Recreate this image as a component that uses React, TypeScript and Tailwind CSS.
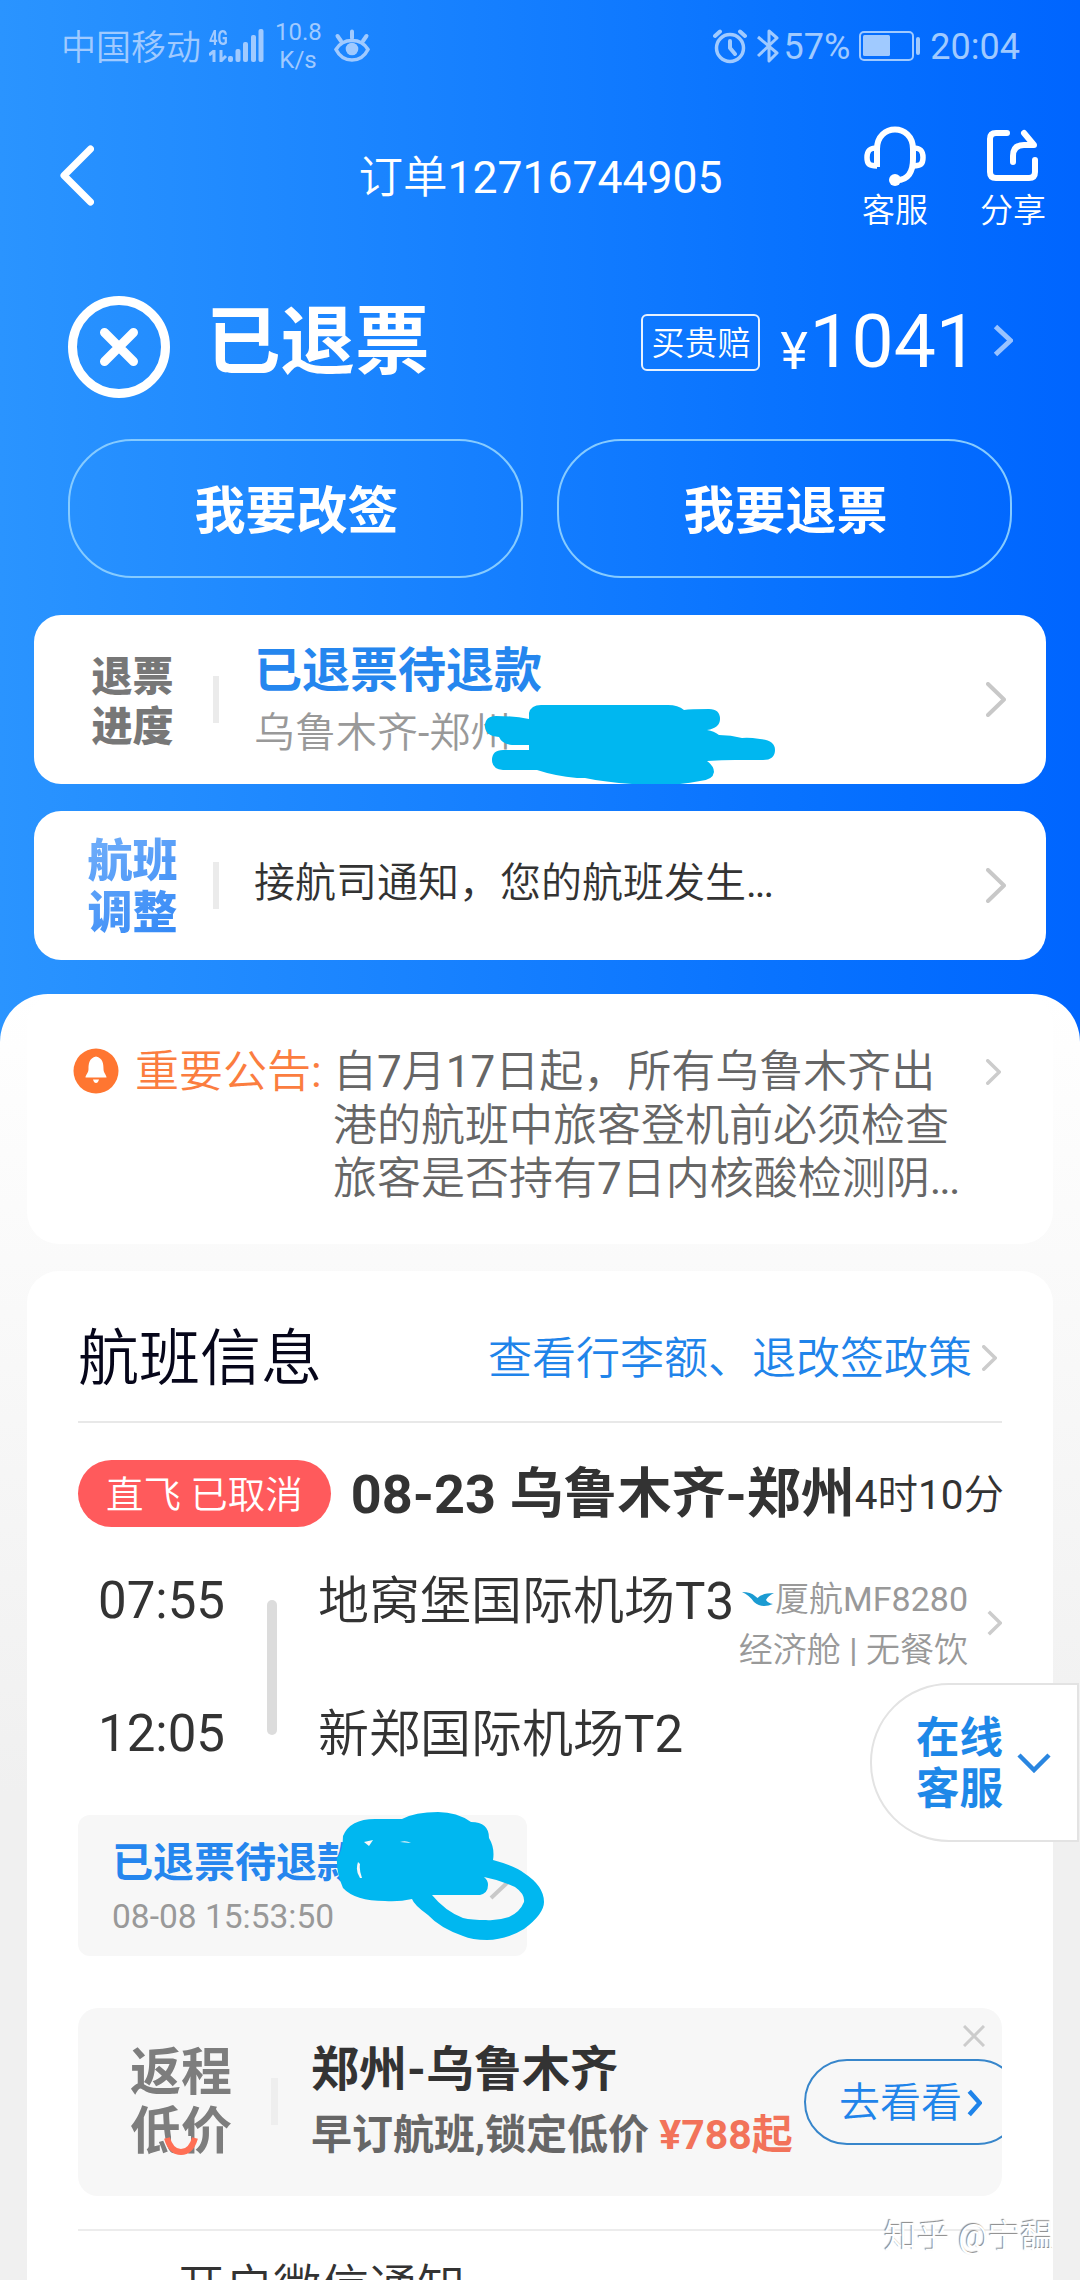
import type { ReactNode } from "react";

interface ChevronProps {
  w: number;
  h: number;
  stroke?: number;
  round?: boolean;
  className?: string;
}

// Right pointing arrow, w/h are the outer size of the drawing
function Chevron({ w, h, stroke = 4, round = true, className = "" }: ChevronProps) {
  const p = stroke / 2;
  return (
    <svg width={w} height={h} viewBox={`0 0 ${w} ${h}`} className={`shrink-0 ${className}`}>
      <path
        d={`M${p} ${p}L${w - p} ${h / 2}L${p} ${h - p}`}
        fill="none"
        stroke="currentColor"
        strokeWidth={stroke}
        strokeLinecap={round ? "round" : "butt"}
        strokeLinejoin={round ? "round" : "miter"}
      />
    </svg>
  );
}

const bold = "font-['Roboto','Noto_Sans_CJK_SC',sans-serif] font-bold";

function StatusBar() {
  return (
    <div className="flex h-[92px] items-center pl-[61px] pr-[60px] text-[#a0caff]">
      <span className="mt-[5px] text-[35px] leading-[36px]">中国移动</span>
      <div className="ml-[8px] h-[36px] w-[20px]">
        <div className="origin-left scale-x-75 text-[20px] font-bold leading-[20px]">4G</div>
        <svg width="20" height="14" viewBox="0 0 20 14" fill="none" stroke="currentColor" strokeWidth="3" className="mt-[1px]">
          <path d="M5 1v12M0 6l5-4M12 1v12M17 7l-5 5" />
        </svg>
      </div>
      <svg width="36" height="36" viewBox="0 0 36 36" className="ml-[-1px]" fill="currentColor">
        <rect x="0" y="28" width="5" height="6" rx="2" />
        <rect x="7.500" y="21" width="5" height="13" rx="2" />
        <rect x="15" y="14" width="5" height="20" rx="2" />
        <rect x="23" y="7" width="5" height="27" rx="2" />
        <rect x="30.500" y="1" width="5" height="33" rx="2" />
      </svg>
      <div className="ml-[11px] w-[46px] text-center text-[24px] leading-[28px]">
        <div>10.8</div>
        <div>K/s</div>
      </div>
      <svg width="36" height="34" viewBox="0 0 36 34" className="ml-[13px]" fill="none" stroke="currentColor" strokeWidth="4" strokeLinecap="round">
        <path d="M2 20.500C9 8.500 27 8.500 34 20.500C27 34.500 9 34.500 2 20.500Z" strokeWidth="3.500" />
        <circle cx="18" cy="20" r="6.300" fill="currentColor" stroke="none" />
        <path d="M18 9V2.500M7 12L3.500 7M29 12L32.500 7" />
      </svg>
      <svg width="34" height="36" viewBox="0 0 34 36" className="ml-auto" fill="none" stroke="currentColor" strokeWidth="3.500" strokeLinecap="round" strokeLinejoin="round">
        <circle cx="17" cy="20" r="13.500" />
        <path d="M17 13v7l5 6M2 8l5-4.500M32 8l-5-4.500" strokeWidth="4" />
      </svg>
      <svg width="22" height="36" viewBox="0 0 22 36" className="ml-[10px]" fill="none" stroke="currentColor" strokeWidth="3" strokeLinejoin="round">
        <path d="M1 9L20 25L12 33V3L20 10L1 28" />
      </svg>
      <span className="ml-[5px] mt-[2px] text-[36px] leading-[36px]">57%</span>
      <svg width="62" height="30" viewBox="0 0 62 30" className="ml-[9px]">
        <rect x="1" y="1" width="53" height="28" rx="4" fill="none" stroke="currentColor" strokeWidth="2" />
        <rect x="4" y="4" width="27" height="21" rx="1.500" fill="currentColor" />
        <rect x="57" y="6" width="4" height="18" rx="2" fill="currentColor" />
      </svg>
      <span className="ml-[9px] mt-[2px] text-[36px] leading-[36px]">20:04</span>
    </div>
  );
}

function NavBar() {
  return (
    <div className="flex h-[168px] justify-between pl-[60px] pr-[31px]">
      <div className="flex w-[187px] pt-[53px]">
        <svg width="34" height="61" viewBox="0 0 34 61" fill="none" stroke="white" strokeWidth="7" strokeLinecap="round" strokeLinejoin="round">
          <path d="M30.500 4L4 30.500L30.500 57" />
        </svg>
      </div>
      <h1 className="-ml-[29px] pt-[61px] text-[44.500px] leading-[50px]">订单12716744905</h1>
      <div className="-ml-[1px] flex w-[187px] gap-[52px] pt-[34px] text-[33px] leading-[40px]">
        <div className="flex flex-col items-center">
          <svg width="64" height="60" viewBox="0 0 64 60" fill="none" stroke="white" strokeWidth="6" strokeLinejoin="round">
            <path d="M14 41V23C14 -3 50 -3 50 23V33C50 46 45 54 34 54" />
            <path d="M14 22C6 22 4 25 4 31.500C4 38 6 40 14 40M50 22C58 22 60 25 60 31.500C60 38 58 40 50 40" strokeWidth="5.500" />
            <circle cx="32" cy="54" r="6" fill="white" stroke="none" />
          </svg>
          <span className="mt-[5px]">客服</span>
        </div>
        <div className="flex flex-col items-center">
          <svg width="54" height="60" viewBox="0 0 54 60" fill="none" stroke="white" strokeWidth="6" strokeLinecap="round" strokeLinejoin="round">
            <path d="M21 7H10Q4 7 4 13V46Q4 52 10 52H43Q49 52 49 46V34" />
            <path d="M27 36V30Q27 19 38 19H48L38 7" />
          </svg>
          <span className="mt-[5px]">分享</span>
        </div>
      </div>
    </div>
  );
}

function OrderStatus() {
  return (
    <>
      <div className="mt-[36px] flex h-[102px] items-center pl-[68px] pr-[67px]">
        <svg width="102" height="102" viewBox="0 0 102 102" fill="none" stroke="white" strokeWidth="9">
          <circle cx="51" cy="51" r="46.500" />
          <path d="M36.500 36.500L65.500 65.500M65.500 36.500L36.500 65.500" strokeLinecap="round" />
        </svg>
        <span className={`ml-[36px] pb-[9px] text-[74.500px] leading-[80px] ${bold}`}>已退票</span>
        <span className="mb-[9px] ml-auto flex h-[57px] w-[119px] items-center justify-center rounded-[6px] border-2 border-white/90 pt-[2px] text-[33px] leading-[34px]">
          买贵赔
        </span>
        <span className="ml-[20px] mt-[10px] w-[29px] text-[52px] leading-[54px]">¥</span>
        <span className="mb-[13px] text-[75px] leading-[80px]">1041</span>
        <Chevron w={20} h={33} stroke={5} round={false} className="mb-[14px] ml-[15px] text-white/60" />
      </div>
      <div className="mt-[41px] flex gap-[34px] px-[68px]">
        {["我要改签", "我要退票"].map((label) => (
          <button
            key={label}
            className={`h-[139px] flex-1 rounded-[64px] border-2 border-[#86cbff] pl-[2px] pt-[6px] text-[51px] leading-[60px] ${bold}`}
          >
            {label}
          </button>
        ))}
      </div>
    </>
  );
}

function NoticeCard({ label, children, className }: { label: ReactNode; children: ReactNode; className: string }) {
  return (
    <div className={`relative mx-[34px] flex shrink-0 items-center rounded-[27px] bg-white pr-[40px] ${className}`}>
      <div className="w-[179px] pl-[18px] pt-[4px] text-center font-['Roboto','Noto_Sans_CJK_SC',sans-serif] font-black">{label}</div>
      <div className="h-[47px] w-[6px] bg-[#ebebeb]" />
      <div className="ml-[35px] flex-1">{children}</div>
      <Chevron w={20} h={35} className="text-[#c8c8c8]" />
    </div>
  );
}

function Announcement() {
  return (
    <section className="flex h-[250px] rounded-[32px] bg-white pl-[46px] pt-[52px] text-[44px] leading-[53.500px]">
      <svg width="46" height="46" viewBox="0 0 46 46" className="mt-[2px]">
        <circle cx="23" cy="23" r="22.500" fill="#ff7631" />
        <path d="M23 8.500C16 10 15.500 16 15.500 21C15.500 25 12.500 27 12.500 29.500H33.500C33.500 27 30.500 25 30.500 21C30.500 16 30 10 23 8.500Z" fill="white" />
        <path d="M20 31.500H26Q25 35 23 35Q21 35 20 31.500Z" fill="white" />
      </svg>
      <span className="ml-[16px] w-[198px] shrink-0 text-[#fb7d3f]">重要公告:</span>
      <p className="w-[641px] shrink-0 whitespace-nowrap text-[#666]">
        自7月17日起，所有乌鲁木齐出
        <br />
        港的航班中旅客登机前必须检查
        <br />
        旅客是否持有7日内核酸检测阴<span className="-tracking-[2px]">...</span>
      </p>
      <Chevron w={15} h={26} stroke={3.5} className="ml-[12px] mt-[13px] text-[#ccc]" />
    </section>
  );
}

function FlightSegment() {
  return (
    <>
      <div className="mt-[37px] flex h-[67px] items-center whitespace-nowrap text-[#333]">
        <span className="flex h-[67px] w-[253px] items-center justify-center rounded-full bg-[#ff5a5c] pt-[3px] text-[37.500px] leading-[40px] text-white">
          直飞 已取消
        </span>
        <span className={`ml-[20px] mt-[2px] text-[54px] leading-[60px] ${bold}`}>08-23 乌鲁木齐-郑州</span>
        <span className="ml-auto -mr-[2px] mt-[2px] text-[40.500px] leading-[44px]">4时10分</span>
      </div>
      <div className="mt-[40px] flex whitespace-nowrap text-[51px] leading-[66px] text-[#333]">
        <div className="mt-[1px] flex w-[189px] shrink-0 flex-col gap-[67px] pl-[20px]">
          <span>07:55</span>
          <span>12:05</span>
        </div>
        <div className="mt-[33px] h-[135px] w-[10px] shrink-0 rounded-full bg-[#dcdcdc]" />
        <div className="ml-[41px] mt-[2px] flex w-[420px] shrink-0 flex-col gap-[67px]">
          <span>地窝堡国际机场T3</span>
          <span>新郑国际机场T2</span>
        </div>
        <div className="-ml-[20px] flex flex-1 flex-col items-end pt-[7px] text-[34px] leading-[51px] text-[#999]">
          <span className="flex items-center">
            <svg width="32" height="16" viewBox="0 0 32 16" className="mr-[1px] shrink-0">
              <path d="M0 0Q9 0 13 4L15.500 6Q20 1 32 1Q26 4 24 8Q26 11 31 12Q20 17 12 10Q7 3 0 0Z" fill="#1b9bd2" />
            </svg>
            厦航MF8280
          </span>
          <span>经济舱 | 无餐饮</span>
        </div>
        <Chevron w={15} h={26} stroke={3.5} round={false} className="ml-[19px] mt-[43px] text-[#ccc]" />
      </div>
    </>
  );
}

function RefundProgress() {
  return (
    <div className="relative mt-[47px] h-[141px] w-[449px] rounded-[12px] bg-[#f7f7f7] pl-[34px] pt-[22px]">
      <div className={`whitespace-nowrap text-[41px] leading-[52px] text-[#2586ee] ${bold}`}>已退票待退款</div>
      <div className="text-[33.500px] leading-[56px] text-[#999]">08-08 15:53:50</div>
      <svg width="260" height="140" viewBox="300 1805 260 140" className="absolute left-[222px] top-[-10px]">
        <path d="M491 1898L508 1882" stroke="#c8c8c8" strokeWidth="4" />
        <path
          fillRule="evenodd"
          fill="#00b7f0"
          d="M343 1836Q350 1819 375 1819H402Q415 1812 438 1812Q457 1812 471 1822Q489 1822 489 1838Q495 1848 493 1860Q515 1866 524 1873Q544 1886 544 1902Q544 1914 524 1929Q506 1940 487 1940Q472 1940 463 1936Q440 1928 428 1915Q414 1905 412 1899Q399 1902 385 1901Q355 1901 343 1888Q336 1872 337 1858Q343 1850 343 1836ZM432 1895H480Q488 1893 488 1885Q488 1880 484 1877Q500 1880 515 1887Q525 1894 524 1902Q520 1912 509 1917Q497 1921 486 1920Q472 1920 463 1918Q445 1911 432 1895ZM364 1842L373 1840L369 1846ZM400 1842Q406 1840 411 1843ZM358 1862Q355 1871 360 1878H362Q359 1870 360 1864Z"
        />
      </svg>
    </div>
  );
}

function ReturnPromo() {
  return (
    <div className="relative mt-[52px] flex h-[188px] overflow-hidden rounded-[20px] bg-[#f7f7f7]">
      <div className={`w-[193px] shrink-0 pl-[52px] pt-[35px] text-[51px] leading-[59px] text-[#7d7d7d] ${bold}`}>
        返程
        <br />
        低价
      </div>
      <svg width="34" height="24" viewBox="0 0 34 24" className="absolute left-[86px] top-[128px]">
        {/* covers the lower strokes so the smile reads as part of the lettering */}
        <path d="M7 0H27V13Q17 22 7 13Z" fill="#f7f7f7" />
        <path d="M3 2Q7 16 17 16Q27 16 31 2" fill="none" stroke="#ff6f55" strokeWidth="6" />
      </svg>
      <div className="mt-[70px] h-[47px] w-[7px] shrink-0 bg-[#eee]" />
      <div className={`ml-[33px] shrink-0 whitespace-nowrap pt-[31px] ${bold}`}>
        <div className="text-[48px] leading-[62px] text-[#333]">郑州-乌鲁木齐</div>
        <div className="mt-[3px] text-[41px] leading-[62px] text-[#666]">
          早订航班,锁定低价 <span className="text-[#f2735a]">¥788起</span>
        </div>
      </div>
      <button className="absolute left-[726px] top-[51px] flex h-[86px] w-[217px] items-center rounded-full border-2 border-[#3786cb] pl-[33px] pt-[1px] text-[41px] leading-[44px] text-[#1f84ea]">
        去看看
        <Chevron w={15} h={28} stroke={4.5} round={false} className="ml-[5px]" />
      </button>
      <svg width="22" height="22" viewBox="0 0 22 22" className="absolute right-[17px] top-[17px]" stroke="#ccc" strokeWidth="3">
        <path d="M1 1L21 21M21 1L1 21" />
      </svg>
    </div>
  );
}

export default function App() {
  return (
    <div className="relative flex h-[2280px] w-[1080px] flex-col overflow-hidden bg-gradient-to-r from-[#2a94ff] via-[#137dff] to-[#0065ff] font-['Roboto','Noto_Sans_CJK_SC_DemiLight','Noto_Sans_CJK_SC',sans-serif]">
      <header className="shrink-0 text-white">
        <StatusBar />
        <NavBar />
        <OrderStatus />
      </header>

      <NoticeCard
        className="mt-[37px] h-[169px]"
        label={
          <div className="text-[41px] leading-[50px] text-[#777]">
            退票
            <br />
            进度
          </div>
        }
      >
        <div className={`pt-[5px] text-[48px] leading-[60px] text-[#2586ee] ${bold}`}>已退票待退款</div>
        <div className="mt-[2px] text-[41px] leading-[60px] text-[#999]">乌鲁木齐-郑州</div>
        <svg width="292" height="82" viewBox="484 703 292 82" className="absolute left-[450px] top-[88px]">
          <path
            fill="#00b7f0"
            d="M485 726Q485 716 496 716Q515 716 529 719V713Q531 705 541 705H668Q678 705 684 710Q690 709 709 709Q720 709 720 719Q720 728 707 730Q714 731 719 735Q731 735 742 738Q748 737 760 739Q775 740 775 750Q775 760 763 760H735Q722 760 707 761Q714 766 714 772Q713 780 700 781Q690 783 680 784H632Q605 782 585 778H577Q555 776 537 770H503Q492 769 492 760Q492 750 503 750H529V745H512Q502 744 499 737Q485 736 485 726Z"
          />
        </svg>
      </NoticeCard>

      <NoticeCard
        className="mt-[27px] h-[149px]"
        label={
          <div className="bg-gradient-to-br from-[#7ab4fa] to-[#2080f5] bg-clip-text text-[45px] leading-[52px] text-transparent">
            航班
            <br />
            调整
          </div>
        }
      >
        <div className="pb-[5px] text-[41px] leading-[60px] text-[#333]">
          接航司通知，您的航班发生<span className="-tracking-[2px]">...</span>
        </div>
      </NoticeCard>

      <main className="mt-[34px] h-[1286px] shrink-0 overflow-hidden rounded-t-[48px] bg-gradient-to-b from-white to-[#f0f0f0] to-[800px] px-[27px]">
        <Announcement />

        <section className="mt-[27px] h-[1040px] rounded-t-[32px] bg-white px-[51px]">
          <div className="flex h-[152px] items-center border-b-2 border-[#e8e8e8] pt-[25px]">
            <h2 className="text-[61px] leading-[64px] text-[#06061a]">航班信息</h2>
            <a className="ml-auto text-[44px] leading-[50px] text-[#1f84ea]">查看行李额、退改签政策</a>
            <Chevron w={15} h={26} stroke={3.5} className="-mt-[1px] ml-[10px] mr-[5px] text-[#ccc]" />
          </div>
          <FlightSegment />
          <RefundProgress />
          <ReturnPromo />
          <div className="mt-[33px] border-t-2 border-[#ececec] pl-[99px] pt-[27px] text-[48px] leading-[60px] text-[#333]">
            开启微信通知
          </div>
        </section>
      </main>

      {/* floating support tab */}
      <div className="absolute left-[870px] top-[1683px] flex h-[159px] w-[209px] items-center rounded-l-[79px] border-2 border-[#e3e3e3] bg-white pl-[44px]">
        <div className={`pt-[2px] text-[43.500px] leading-[51px] text-[#1e88e8] ${bold}`}>
          在线
          <br />
          客服
        </div>
        <svg width="34" height="20" viewBox="0 0 34 20" className="ml-[14px]" fill="none" stroke="#2a86e0" strokeWidth="4.500">
          <path d="M2 2L17 17L32 2" />
        </svg>
      </div>

      <div className="absolute left-[884px] top-[2216px] whitespace-nowrap text-[33px] leading-[42px] text-white [text-shadow:-1px_-1px_1px_#888]">
        知乎 @宁馧
      </div>
    </div>
  );
}
